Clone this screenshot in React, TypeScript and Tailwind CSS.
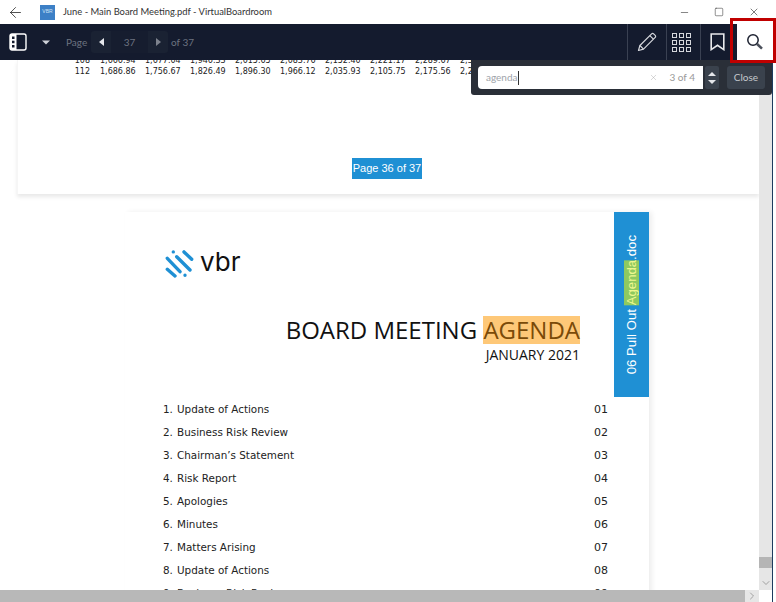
import { ArrowLeft, ChevronDown, ChevronRight, Minus, Square, X } from 'lucide-react';

const rows = [
  ['108', '1,666.94', '1,677.04', '1,946.33', '2,015.65', '2,083.76', '2,152.40', '2,221.17', '2,289.67', '2,3'],
  ['112', '1,686.86', '1,756.67', '1,826.49', '1,896.30', '1,966.12', '2,035.93', '2,105.75', '2,175.56', '2,2'],
];

const agenda = [
  ['1.', 'Update of Actions', '01'],
  ['2.', 'Business Risk Review', '02'],
  ['3.', 'Chairman’s Statement', '03'],
  ['4.', 'Risk Report', '04'],
  ['5.', 'Apologies', '05'],
  ['6.', 'Minutes', '06'],
  ['7.', 'Matters Arising', '07'],
  ['8.', 'Update of Actions', '08'],
  ['9.', 'Business Risk Review', '09'],
];

const Divider = () => <div className="w-px h-full bg-[#3a4152]" />;

export default function App() {
  return (
    <div className="w-[776px] h-[602px] overflow-hidden bg-white flex flex-col relative font-['Lato',sans-serif]">
      {/* Title bar */}
      <div className="h-[24px] flex items-center shrink-0 text-[#222]">
        <div className="w-[40px] pl-[7px]">
          <ArrowLeft size={17} strokeWidth={1.1} />
        </div>
        <div className="w-[15px] h-[15px] bg-[#3d80c6] flex items-center justify-center text-[5px] text-[#cfe3f7] font-['Liberation_Sans',sans-serif]">
          VBR
        </div>
        <span className="ml-[8px] text-[9.4px] text-[#333]">June - Main Board Meeting.pdf - VirtualBoardroom</span>
        <div className="ml-auto flex items-center pr-[16px] gap-[24px] text-[#444]">
          <Minus size={11} strokeWidth={1.4} />
          <Square size={10} strokeWidth={1.4} />
          <X size={12} strokeWidth={1.4} />
        </div>
      </div>

      {/* Toolbar */}
      <div className="h-[36px] shrink-0 mr-[3px] bg-[#141b2e] flex items-center text-[10px] text-[#6d7380]">
        <svg className="ml-[9px]" width="18" height="18" viewBox="0 0 18 18" fill="none">
          <rect x="1" y="1" width="16" height="16" rx="2" stroke="#fff" strokeWidth="1.4" />
          <rect x="1" y="1" width="6.5" height="16" fill="#fff" />
          <rect x="3" y="3.5" width="2.5" height="2.5" fill="#141b2e" />
          <rect x="3" y="7.7" width="2.5" height="2.5" fill="#141b2e" />
          <rect x="3" y="12" width="2.5" height="2.5" fill="#141b2e" />
        </svg>
        <svg className="ml-[15px]" width="8" height="5" viewBox="0 0 8 5">
          <path d="M0 0.5h8L4 4.5z" fill="#cfd2d8" />
        </svg>
        <span className="ml-[16px] w-[25px]">Page</span>
        <div className="h-[22px] w-[20px] rounded-l-[3px] bg-[#1a2233] flex items-center justify-center">
          <svg width="5" height="8" viewBox="0 0 5 8">
            <path d="M5 0v8L0 4z" fill="#e5e7eb" />
          </svg>
        </div>
        <div className="w-[37px] h-[22px] bg-[#161d2f] flex items-center justify-center">37</div>
        <div className="h-[22px] w-[20px] rounded-r-[3px] bg-[#1a2233] flex items-center justify-center">
          <svg width="5" height="8" viewBox="0 0 5 8">
            <path d="M0 0v8l5-4z" fill="#7d828d" />
          </svg>
        </div>
        <span className="ml-[3px]">of 37</span>

        <div className="ml-auto h-full flex items-center">
          <Divider />
          <div className="w-[38px] flex justify-center">
            <svg width="20" height="20" viewBox="0 0 20 20" fill="none" stroke="#d5d7dc" strokeWidth="1.2" strokeLinejoin="round">
              <path d="M1.5 18.5l1.4-5L14.6 1.8a1.4 1.4 0 0 1 2 0l1.6 1.6a1.4 1.4 0 0 1 0 2L6.5 17.1z" />
              <path d="M2.9 13.5l3.6 3.6M12.8 3.6l3.6 3.6" />
            </svg>
          </div>
          <Divider />
          <div className="w-[33px] grid grid-cols-[5px_5px_5px] gap-[2px] content-center pl-[5px]">
            {Array.from({ length: 9 }).map((_, i) => (
              <div key={i} className="w-[5px] h-[5px] border border-[#d5d7dc]" />
            ))}
          </div>
          <Divider />
          <div className="w-[36px] flex justify-center pr-[3px]">
            <svg width="15" height="18" viewBox="0 0 15 18" fill="none" stroke="#e8e9ec" strokeWidth="1.6">
              <path d="M1.2 1h12.6v15.6L7.5 12.3 1.2 16.6z" />
            </svg>
          </div>
          <div className="w-[36px] h-full bg-white flex items-center justify-center">
            <svg width="18" height="18" viewBox="0 0 18 18" fill="none">
              <circle cx="7" cy="7" r="5.2" stroke="#1c2130" strokeWidth="1.5" />
              <path d="M10.8 10.8L16 15.6" stroke="#4a4f5a" strokeWidth="2.6" />
            </svg>
          </div>
        </div>
      </div>

      {/* Document + scrollbars */}
      <div className="flex-1 min-h-0 mr-[3px] border-r border-[#1d3b5e] flex flex-col">
        <div className="flex-1 min-h-0 flex">
          <div className="flex-1 min-w-0 overflow-hidden flex flex-col">
            {/* Page 36 */}
            <div className="h-[134px] shrink-0 ml-[17px] flex flex-col items-center border-l border-[#f6f6f6] shadow-[0_3px_4px_rgba(0,0,0,0.09)] overflow-hidden">
              <div className="self-start -mt-[5px] ml-[58px] text-[8px] leading-[11px] text-[#222] font-['DejaVu_Sans',sans-serif] whitespace-nowrap">
                {rows.map((row) => (
                  <div key={row[0]} className="flex">
                    {row.map((cell, i) => (
                      <span key={i} className={i === 0 ? 'w-[24px] text-right mr-[10px] -ml-[10px]' : 'w-[45px] shrink-0'}>
                        {cell}
                      </span>
                    ))}
                  </div>
                ))}
              </div>
              <div className="mt-[81px] mr-[3px] w-[70px] h-[21px] bg-[#1f90d4] text-white text-[11px] whitespace-nowrap flex items-center justify-center font-['Liberation_Sans',sans-serif]">
                Page 36 of 37
              </div>
            </div>

            {/* Page 37 */}
            <div className="mt-[18px] ml-[125px] w-[524px] shrink-0 flex shadow-[3px_0_5px_rgba(0,0,0,0.07)]">
              <div className="flex-1 min-w-0">
                <div className="mt-[38px] ml-[40px] flex items-center gap-[6px]">
                  <svg width="29" height="29" viewBox="0 0 29 29" stroke="#1f90d4" strokeWidth="3.4" strokeLinecap="round">
                    <path d="M8.3 1.9h.01M19 1.9l7.7 7.4M11.7 6.7L25 20M2.3 8.3L15 21.7M2.3 19.3L10 26M20 25.2h.01" />
                  </svg>
                  <span className="text-[26px] leading-none text-[#111] font-['Inter',sans-serif] -mt-[6px]">vbr</span>
                </div>
                <div className="mt-[34px] pr-[34px] text-right text-[#111] font-['Open_Sans',sans-serif]">
                  <div className="text-[24px] leading-[33px] whitespace-nowrap">
                    BOARD MEETING <span className="bg-[#fec878] text-[#7a4a08] inline-block h-[28px] leading-[28px]">AGENDA</span>
                  </div>
                  <div className="text-[14px] leading-[19px] -mt-[1px]">JANUARY 2021</div>
                </div>
                <div className="mt-[34px] pl-[38px] pr-[6px] text-[10.4px] leading-[23px] text-[#222] font-['DejaVu_Sans',sans-serif]">
                  {agenda.map(([num, label, page]) => (
                    <div key={num} className="flex">
                      <span className="w-[14px]">{num}</span>
                      <span>{label}</span>
                      <span className="ml-auto text-[11px]">{page}</span>
                    </div>
                  ))}
                </div>
              </div>
              <div className="w-[35px] h-[185px] shrink-0 bg-[#1f90d4] flex justify-center items-start pt-[23px] text-white text-[13.2px] font-['Liberation_Sans',sans-serif]">
                <span className="[writing-mode:vertical-rl] rotate-180 leading-[16px] whitespace-nowrap">
                  06 Pull Out <span className="bg-[#8fc95f] text-[#eef78f]">Agenda</span>.doc
                </span>
              </div>
            </div>
          </div>

          {/* Vertical scrollbar */}
          <div className="w-[13px] shrink-0 bg-[#e6e6e6] flex flex-col justify-end items-center text-[#8a8a8a]">
            <div className="w-full h-[11px] bg-[#b5b5b5] mb-[9px]" />
            <ChevronDown size={12} strokeWidth={1.5} className="mb-[1px]" />
          </div>
        </div>

        {/* Horizontal scrollbar */}
        <div className="h-[12px] shrink-0 flex">
          <div className="w-[745px] bg-[#b8b8b8]" />
          <div className="w-[14px] bg-[#e6e6e6] flex items-center justify-center text-[#8a8a8a]">
            <ChevronRight size={12} strokeWidth={1.5} />
          </div>
        </div>
      </div>

      {/* Search popover */}
      <div className="absolute left-[471px] top-[60px] w-[301px] h-[35px] bg-[#2a2f38] rounded-b-[3px] flex items-center pl-[7px]">
        <div className="w-[225px] h-[23px] bg-white rounded-l-[4px] flex items-center text-[10px] text-[#a0a4aa] pl-[8px]">
          <span>agenda</span>
          <span className="w-px h-[14px] bg-[#333]" />
          <X size={9} strokeWidth={1} className="ml-auto mr-[11px] text-[#999]" />
          <span className="mr-[8px] text-[#999]">3 of 4</span>
        </div>
        <div className="ml-[2px] w-[14px] h-[23px] bg-[#3a424d] rounded-[2px] flex flex-col items-center justify-center gap-[4px]">
          <svg width="8" height="4" viewBox="0 0 8 4"><path d="M0 4h8L4 0z" fill="#e5e7eb" /></svg>
          <svg width="8" height="4" viewBox="0 0 8 4"><path d="M0 0h8L4 4z" fill="#e5e7eb" /></svg>
        </div>
        <div className="ml-[8px] w-[38px] h-[23px] bg-[#3a424d] rounded-[3px] flex items-center justify-center text-[10px] text-[#c5c8cc]">
          Close
        </div>
      </div>

      {/* Red callout */}
      <div className="absolute left-[730px] top-[18px] w-[46px] h-[45px] border-[3px] border-[#c00000]" />
    </div>
  );
}
